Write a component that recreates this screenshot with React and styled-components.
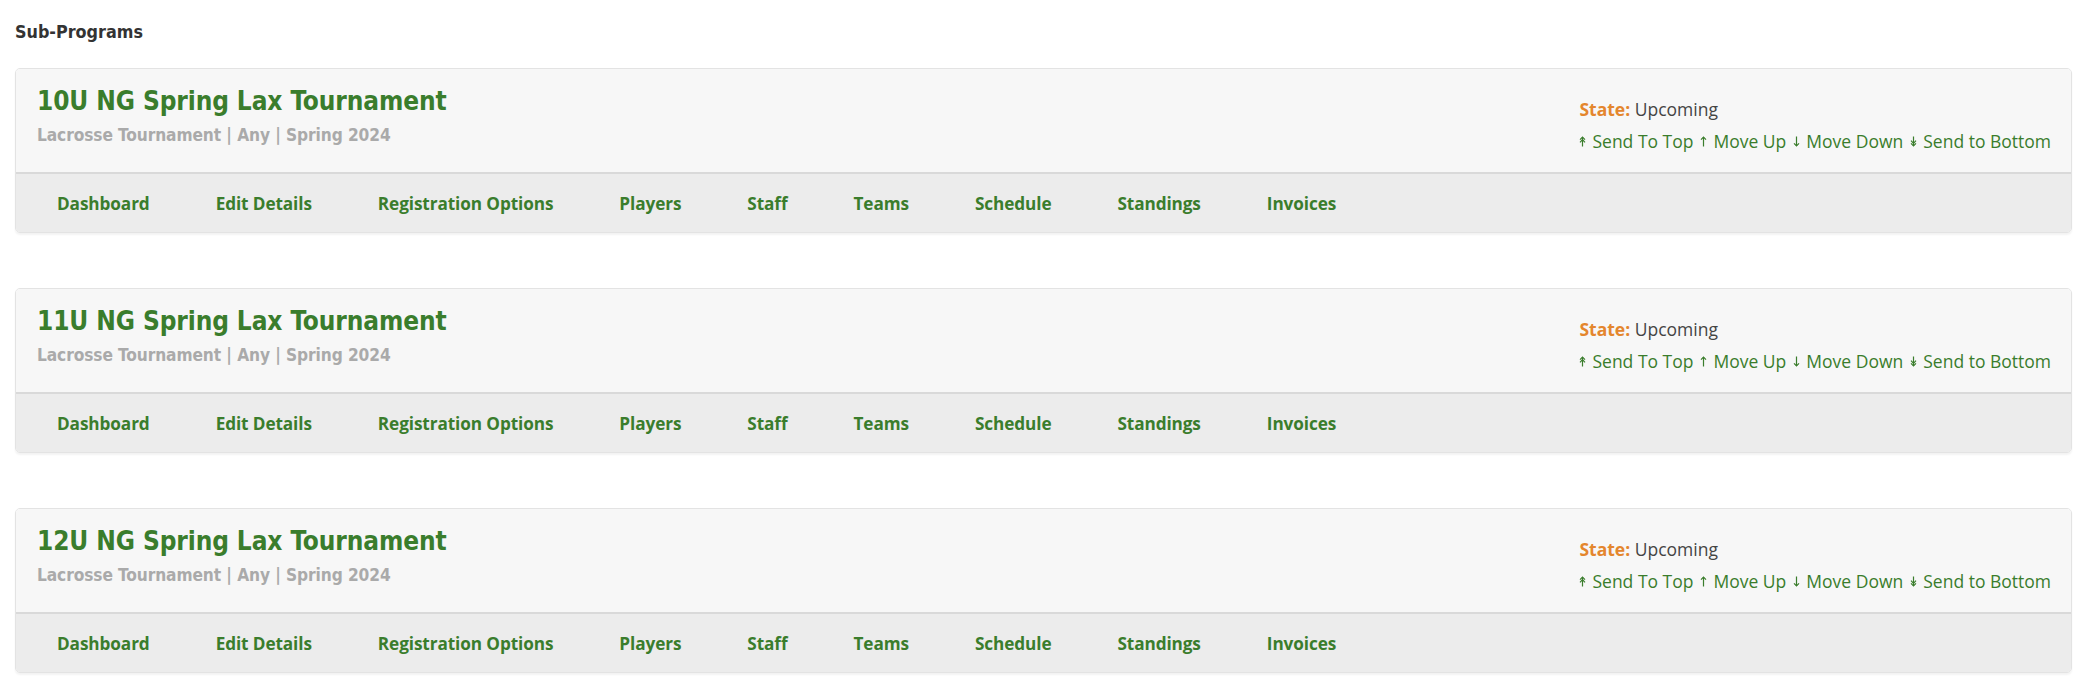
import React from 'react';
import styled, { createGlobalStyle } from 'styled-components';

const GlobalStyle = createGlobalStyle`
    html, body {
        margin: 0;
        padding: 0;
        background: #ffffff;
    }
    body {
        font-family: "Open Sans", "Liberation Sans", sans-serif;
    }
`;

const Page = styled.div`
    padding: 19px 18px 20px 15px;
`;

const Heading = styled.h3`
    margin: 0 0 23px 0;
    font-family: "DejaVu Sans Condensed", "DejaVu Sans", sans-serif;
    font-weight: bold;
    font-size: 17.8px;
    line-height: 26px;
    color: #333333;
`;

const List = styled.div`
    display: flex;
    flex-direction: column;
    gap: 55px;
`;

const Card = styled.div`
    border: 1px solid #e3e3e3;
    border-radius: 5px;
    overflow: hidden;
    box-shadow: 0 2px 2px rgba(0, 0, 0, 0.05);
`;

const Header = styled.div`
    display: flex;
    justify-content: space-between;
    align-items: flex-start;
    height: 103px;
    padding: 0 20px 0 21px;
    background: #f7f7f7;
    border-bottom: 2px solid #d9d9d9;
`;

const TitleBlock = styled.div`
    padding-top: 15px;
`;

const Title = styled.div`
    font-family: "DejaVu Sans Condensed", "DejaVu Sans", sans-serif;
    font-weight: bold;
    font-size: 26px;
    line-height: 34px;
    letter-spacing: -0.1px;
    color: #3a7d2c;
`;

const Subtitle = styled.div`
    margin-top: 2px;
    font-family: "DejaVu Sans Condensed", "DejaVu Sans", sans-serif;
    font-weight: bold;
    font-size: 17.2px;
    line-height: 30px;
    letter-spacing: -0.1px;
    color: #aaaaaa;
`;

const Side = styled.div`
    padding-top: 24px;
    font-size: 17.5px;
    line-height: 32px;
`;

const StateLine = styled.div`
    color: #444444;
`;

const StateLabel = styled.span`
    color: #e4862e;
    font-weight: bold;
`;

const Moves = styled.div`
    display: flex;
    align-items: center;
    gap: 7px;
`;

const MoveLink = styled.a`
    display: inline-flex;
    align-items: center;
    gap: 6px;
    color: #3a7d2c;
    text-decoration: none;
    cursor: pointer;
`;

const Nav = styled.nav`
    display: flex;
    align-items: center;
    height: 58px;
    padding-left: 8px;
    background: #ececec;
`;

const NavItem = styled.a`
    padding: 0 33px;
    font-weight: bold;
    font-size: 17.2px;
    color: #3a7d2c;
    text-decoration: none;
    cursor: pointer;
    letter-spacing: -0.1px;
`;

const Arrow = ({ double, down }) => (
    <svg width="7" height="11" viewBox="0 0 7 11" style={{ transform: down ? 'rotate(180deg)' : 'none' }}>
        <path d="M3.5 1 V10.5" stroke="#3a7d2c" strokeWidth="1.2" fill="none" />
        <path d="M1 3.6 L3.5 1 L6 3.6" stroke="#3a7d2c" strokeWidth="1.2" fill="none" />
        {double && <path d="M1 6.3 L3.5 3.7 L6 6.3" stroke="#3a7d2c" strokeWidth="1.2" fill="none" />}
    </svg>
);

const programs = [
    '10U NG Spring Lax Tournament',
    '11U NG Spring Lax Tournament',
    '12U NG Spring Lax Tournament',
];

const navItems = [
    'Dashboard',
    'Edit Details',
    'Registration Options',
    'Players',
    'Staff',
    'Teams',
    'Schedule',
    'Standings',
    'Invoices',
];

const moves = [
    { label: 'Send To Top', double: true, down: false },
    { label: 'Move Up', double: false, down: false },
    { label: 'Move Down', double: false, down: true },
    { label: 'Send to Bottom', double: true, down: true },
];

export default function App() {
    return (
        <Page>
            <GlobalStyle />
            <Heading>Sub-Programs</Heading>
            <List>
                {programs.map((name) => (
                    <Card key={name}>
                        <Header>
                            <TitleBlock>
                                <Title>{name}</Title>
                                <Subtitle>Lacrosse Tournament | Any | Spring 2024</Subtitle>
                            </TitleBlock>
                            <Side>
                                <StateLine>
                                    <StateLabel>State:</StateLabel> Upcoming
                                </StateLine>
                                <Moves>
                                    {moves.map((m) => (
                                        <MoveLink key={m.label}>
                                            <Arrow double={m.double} down={m.down} />
                                            {m.label}
                                        </MoveLink>
                                    ))}
                                </Moves>
                            </Side>
                        </Header>
                        <Nav>
                            {navItems.map((item) => (
                                <NavItem key={item}>{item}</NavItem>
                            ))}
                        </Nav>
                    </Card>
                ))}
            </List>
        </Page>
    );
}
